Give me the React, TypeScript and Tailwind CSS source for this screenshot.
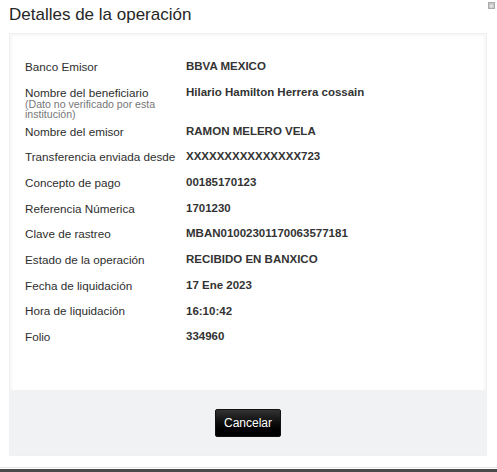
import React from "react";

const rows: { label: string; value: string; note?: string }[] = [
  { label: "Banco Emisor", value: "BBVA MEXICO" },
  { label: "Nombre del beneficiario", value: "Hilario Hamilton Herrera cossain", note: "(Dato no verificado por esta institución)" },
  { label: "Nombre del emisor", value: "RAMON MELERO VELA" },
  { label: "Transferencia enviada desde", value: "XXXXXXXXXXXXXXX723" },
  { label: "Concepto de pago", value: "00185170123" },
  { label: "Referencia Númerica", value: "1701230" },
  { label: "Clave de rastreo", value: "MBAN01002301170063577181" },
  { label: "Estado de la operación", value: "RECIBIDO EN BANXICO" },
  { label: "Fecha de liquidación", value: "17 Ene 2023" },
  { label: "Hora de liquidación", value: "16:10:42" },
  { label: "Folio", value: "334960" },
];

export default function App() {
  return (
    <div
      className="w-[497px] h-[472px] bg-white relative overflow-hidden flex flex-col"
      style={{ fontFamily: '"Liberation Sans", Arial, sans-serif' }}
    >
      <div className="absolute right-[2px] top-[2px] w-[7px] h-[7px] bg-[#c9c9c9] border border-[#aaa] flex items-center justify-center text-[6px] leading-none text-white">
        ×
      </div>
      <div className="h-[33px] pl-[9px] pt-[5px] text-[17px] leading-[20px] text-[#262626]">
        Detalles de la operación
      </div>
      <div className="mx-[9px] w-[478px] h-[423px] border border-[#f0f0f0] shadow-[inset_0_0_0_2px_#f8f8f8] flex flex-col">
        <div className="flex-1 pt-[20px] pl-[15px]">
          {rows.map((r) => (
            <div key={r.label} className="flex flex-col">
              <div className="flex h-[25.7px] items-center text-[11.7px] text-[#2e2e2e]">
                <div className="w-[161px] shrink-0">{r.label}</div>
                <div className="font-bold text-[11.5px] text-[#333]">{r.value}</div>
              </div>
              {r.note && (
                <div className="-mt-[6px] -mb-[0.9px] w-[150px] text-[10.6px] leading-[10px] text-[#777]">
                  {r.note}
                </div>
              )}
            </div>
          ))}
        </div>
        <div className="h-[65px] bg-[#f1f2f3] flex items-center justify-center">
          <button className="w-[66px] h-[28px] rounded-[2px] bg-gradient-to-b from-[#333] to-[#000] text-white text-[12px] border border-[#111]">
            Cancelar
          </button>
        </div>
      </div>
      <div className="mt-auto h-[1px] bg-[#e6e6e6]" />
      <div className="h-[1px] bg-white" />
      <div className="h-[3px] bg-[#4a4a4a]" />
    </div>
  );
}
